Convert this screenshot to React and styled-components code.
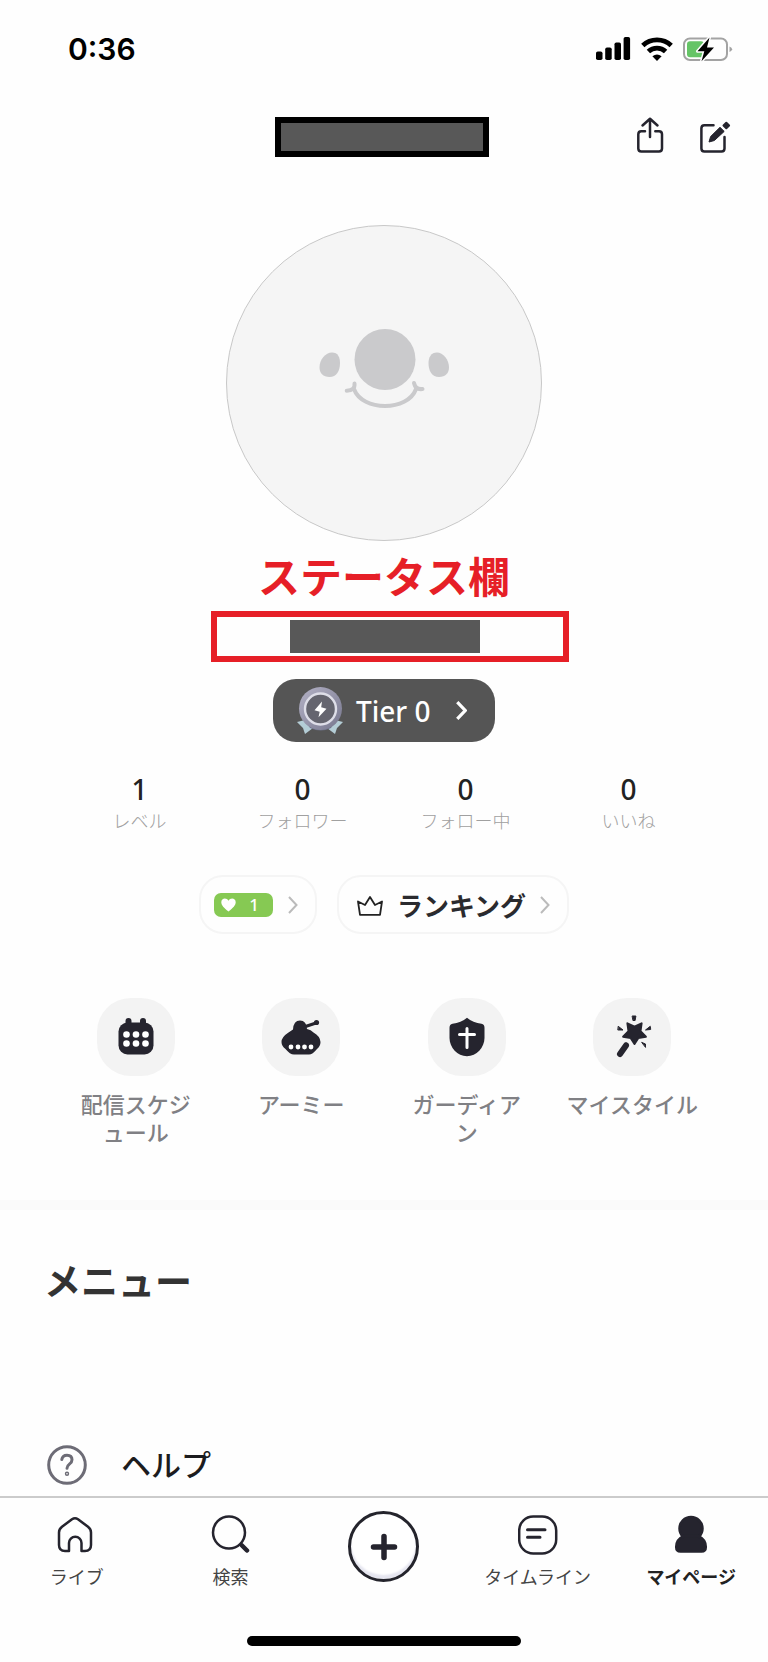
import React from 'react'
import styled, { createGlobalStyle } from 'styled-components'

const GlobalStyle = createGlobalStyle`
  * {
    box-sizing: border-box;
  }
  body {
    margin: 0;
    background: #fefefe;
    color: #222;
    font-family: "Noto Sans CJK JP", "Noto Sans", sans-serif;
  }
  svg {
    display: block;
    flex: none;
  }
  button {
    border: 0;
    padding: 0;
    background: none;
    color: inherit;
    font: inherit;
    cursor: pointer;
  }
  a {
    color: inherit;
    text-decoration: none;
  }
`;
const Page = styled.div`
  display: flex;
  flex-direction: column;
  min-height: 100vh;
`;
const StatusBar = styled.div`
  display: flex;
  align-items: center;
  justify-content: space-between;
  height: 97px;
  padding: 0 35px 0 68px;
`;
const Time = styled.time`
  font-family: Inter, sans-serif;
  font-size: 30px;
  font-weight: 600;
  color: #000;
`;
const StatusIcons = styled.div`
  display: flex;
  align-items: center;
  gap: 10px;
`;
const Header = styled.header`
  display: grid;
  grid-template-columns: 1fr auto 1fr;
  align-items: center;
  height: 80px;
  padding: 0 36px 0 32px;
`;
const HiddenName = styled.div`
  grid-column: 2;
  width: 214px;
  height: 40px;
  border: 6px solid #000;
  background: #585858;
`;
const HeaderActions = styled.div`
  display: flex;
  justify-content: flex-end;
  gap: 32px;
`;
const Profile = styled.main`
  display: flex;
  flex-direction: column;
  align-items: center;
  padding: 48px 0 55px;
`;
const Avatar = styled.div`
  width: 316px;
  height: 316px;
  border: 1px solid #c8c8c8;
  border-radius: 50%;
  background: #f5f5f5;
`;
const Note = styled.p`
  margin: 10px 0 12px;
  font-size: 42px;
  font-weight: 700;
  line-height: 48px;
  color: #e61f27;
`;
const StatusFrame = styled.div`
  display: flex;
  align-items: center;
  width: 358px;
  height: 51px;
  margin-left: 12px;
  padding-left: 73px;
  border: 6px solid #e61f27;
`;
const HiddenStatus = styled.div`
  width: 190px;
  height: 33px;
  background: #585858;
`;
const TierButton = styled.button`
  display: flex;
  align-items: center;
  width: 222px;
  height: 63px;
  margin-top: 17px;
  padding: 0 28px 0 23px;
  border-radius: 23px;
  background: #555;
  color: #fff;
  font-family: "Noto Sans", sans-serif;
  font-size: 28px;
  font-weight: 500;

  span {
    flex: 1;
    padding-left: 12px;
    text-align: left;
  }
`;
const Stats = styled.dl`
  display: grid;
  grid-template-columns: repeat(4, 1fr);
  align-self: stretch;
  margin: 31px 0 0;
  padding: 0 58px;
  text-align: center;
`;
const Stat = styled.div`
  display: flex;
  flex-direction: column-reverse;
  gap: 2px;
`;
const StatValue = styled.dd`
  margin: 0;
  font-family: "Noto Sans", sans-serif;
  font-size: 28px;
  font-weight: 500;
  line-height: 32px;
`;
const StatLabel = styled.dt`
  font-size: 18px;
  font-weight: 300;
  line-height: 26px;
  color: #a0a0a0;
`;
const Chips = styled.div`
  display: flex;
  gap: 20px;
  margin-top: 42px;
`;
const Chip = styled.button`
  display: flex;
  align-items: center;
  gap: ${(props) => props.$gap}px;
  height: 59px;
  padding: ${(props) => props.$pad};
  border: 2px solid #f5f5f5;
  border-radius: 24px;
  color: #2a2a2e;
  font-size: 26px;
  font-weight: 700;
  line-height: 36px;
`;
const FanBadge = styled.span`
  display: flex;
  align-items: center;
  justify-content: space-between;
  width: 59px;
  height: 24px;
  padding: 0 14px 0 7px;
  border-radius: 7px;
  background: #86c953;
  color: #fff;
  font-family: "Noto Sans", sans-serif;
  font-size: 17px;
  font-weight: 500;
`;
const Shortcuts = styled.nav`
  display: grid;
  grid-template-columns: repeat(4, 1fr);
  align-self: stretch;
  margin-top: 64px;
  padding: 0 53px;
`;
const Shortcut = styled.a`
  display: flex;
  flex-direction: column;
  align-items: center;
  gap: 13px;
  font-size: 22px;
  font-weight: 500;
  line-height: 28px;
  color: #808084;
  text-align: center;
  white-space: pre-line;
`;
const ShortcutIcon = styled.span`
  display: grid;
  place-items: center;
  width: 78px;
  height: 78px;
  border-radius: 34px;
  background: #f3f3f3;
`;
const Divider = styled.hr`
  width: 100%;
  height: 10px;
  margin: 0;
  border: 0;
  background: #fafafa;
`;
const Menu = styled.section`
  flex: 1;
  padding: 46px 44px 11px;
`;
const MenuTitle = styled.h2`
  margin: 0 0 141px;
  font-size: 37px;
  font-weight: 700;
  line-height: 48px;
  color: #333;
`;
const MenuItem = styled.a`
  display: flex;
  gap: 34px;
  height: 40px;
  padding-left: 3px;
  font-size: 30px;
  font-weight: 500;
  line-height: 37px;
  color: #1c1c1e;
`;
const TabBar = styled.nav`
  display: grid;
  grid-template-columns: repeat(5, 1fr);
  align-items: start;
  height: 140px;
  padding-top: 13px;
  border-top: 2px solid #cbcbcb;
`;
const Tab = styled.a`
  display: flex;
  flex-direction: column;
  align-items: center;
  gap: 9px;
  padding-top: 4px;
  font-size: 18px;
  font-weight: ${(props) => (props.$active ? 700 : 400)};
  line-height: 24px;
  color: ${(props) => (props.$active ? '#222' : '#444')};
`;
const AddButton = styled.button`
  display: grid;
  place-items: center;
  justify-self: center;
  width: 71px;
  height: 71px;
  border: 3px solid #24242c;
  border-radius: 50%;
  background: #fff;
  box-shadow: inset 0 -4px 2px #e6e6f0;
`;
const HomeIndicator = styled.div`
  align-self: center;
  width: 274px;
  height: 10px;
  margin-bottom: 16px;
  border-radius: 5px;
  background: #000;
`;

const ink = '#25242e'

const Chevron = ({ color, width = 2, w = 10, h = 18 }) => (
  <svg width={w} height={h} viewBox="0 0 10 18" fill="none" stroke={color} strokeWidth={width}>
    <path d="M1 1 8.500 9 1 17" />
  </svg>
)

const SignalIcon = () => (
  <svg width="35" height="24" viewBox="0 0 35 24">
    <rect x="0" y="14.500" width="6.500" height="8.500" rx="1.800" />
    <rect x="9.200" y="10.500" width="6.500" height="12.500" rx="1.800" />
    <rect x="18.500" y="5.500" width="6.500" height="17.500" rx="1.800" />
    <rect x="27.600" y="0" width="6.500" height="23" rx="1.800" />
  </svg>
)

const WifiIcon = () => (
  <svg width="32" height="24" viewBox="0 0 32 24" fill="none" stroke="#000" strokeWidth="4.800">
    <path d="M1.800 8.600a20.500 20.500 0 0 1 28.400 0" />
    <path d="M7.400 14.600a12.400 12.400 0 0 1 17.200 0" />
    <path d="M16 24l-4.600-4.700q4.600-3.600 9.200 0z" fill="#000" stroke="none" />
  </svg>
)

const BatteryIcon = () => (
  <svg width="50" height="26" viewBox="0 0 50 26">
    <rect x="1" y="2.500" width="43" height="21.500" rx="6" fill="none" stroke="#a3a3a3" strokeWidth="2" />
    <path d="M46.500 10.500q2.600 1 2.600 2.800t-2.600 2.800z" fill="#a3a3a3" />
    <rect x="4" y="5.300" width="17" height="16" rx="3" fill="#65c466" />
    <path
      d="M26.500 1.500 14.500 15.300h6.800L18.500 25.200 31 11.600H24z"
      stroke="#fefefe"
      strokeWidth="3"
      paintOrder="stroke"
      strokeLinejoin="round"
    />
  </svg>
)

const ShareIcon = () => (
  <svg width="32" height="40" viewBox="0 2 32 40" fill="none" stroke={ink} strokeWidth="2.500" strokeLinecap="round" strokeLinejoin="round">
    <path d="M11 16.300H7.300q-3 0-3 3V33.500q0 3 3 3H25q3 0 3-3V19.300q0-3-3-3h-3.700" />
    <path d="M16 22V4M8.500 10.500l7.500-6.800 7.500 6.800" />
  </svg>
)

const EditIcon = () => (
  <svg width="34" height="40" viewBox="0 2 34 40">
    <path d="M15.500 10.300H6.400q-3 0-3 3V33.500q0 3 3 3h17.100q3 0 3-3V22" fill="none" stroke={ink} strokeWidth="2.500" strokeLinecap="round" />
    <path d="M11 27l1.600-5.400 9.400-9.300 4.200 4.100-9.800 9.100z" fill={ink} stroke={ink} strokeWidth="1" strokeLinejoin="round" />
    <path d="M25.500 10.500l2.800-2.800 2.800 2.800-2.800 2.800z" fill={ink} stroke={ink} strokeWidth="2" strokeLinejoin="round" />
  </svg>
)

const Face = () => (
  <svg width="314" height="314" viewBox="0 0 314 314" fill="#cacacc">
    <circle cx="158" cy="133.500" r="30.500" />
    <path d="M105 126.500c6 0 8 5 8 10.500 0 8-3.500 14-10.500 14-6.500 0-10-4-10-9.500 0-8 6-15 12.500-15z" />
    <path d="M210 126.500c-6 0-8.500 5-8.500 10.500 0 8 3.500 14 10.500 14 6.500 0 10-4 10-9.500 0-8-6-15-12-15z" />
    <path
      d="M127.500 157.500q.8 7-7.800 7.200M187 157q1.500 7 8.500 6M127 163C135 185.600 181 185.600 189 163"
      fill="none"
      stroke="#cacacc"
      strokeWidth="4"
      strokeLinecap="round"
    />
  </svg>
)

const TierIcon = () => (
  <svg width="48" height="49" viewBox="0 0 48 49">
    <defs>
      <linearGradient id="tier" x1="0" y1="0" x2="1" y2="1">
        <stop offset="0" stopColor="#b4b2c6" />
        <stop offset="1" stopColor="#77778e" />
      </linearGradient>
    </defs>
    <path d="M1 36l8-2 8 8-8 6-2-6zM47 36l-8-2-8 8 8 6 2-6z" fill="#b4cdd6" />
    <path d="M9 34q15 13 31 0l-5 8q-10 5-21 0z" fill="#6c7086" />
    <circle cx="24.500" cy="22.500" r="21.500" fill="url(#tier)" />
    <circle cx="24.500" cy="23" r="15.500" fill="#65656f" stroke="#dedee8" strokeWidth="2.400" />
    <path d="M26 15.500l-7.500 8.800 5.200 1.500-1.200 5.500 8-8.600-5.300-1.500z" fill="#fff" />
  </svg>
)

const HeartIcon = () => (
  <svg width="15" height="14" viewBox="0 0 15 14" fill="#fff">
    <path d="M7.500 13.500C3 10 .3 7.200.3 4.200.3 0 5.700-.7 7.500 2.800 9.300-.7 14.700 0 14.700 4.200c0 3-2.700 5.800-7.200 9.300z" />
  </svg>
)

const CrownIcon = () => (
  <svg width="26" height="22" viewBox="0 -1 26 22" fill="none" stroke="#222" strokeWidth="1.800" strokeLinejoin="round">
    <path d="M1 6.500l7 3.500L13 2l5 8 7-3.500-2 13.300H3z" />
  </svg>
)

const CalendarIcon = () => (
  <svg width="36" height="40" viewBox="0 0 36 40">
    <path d="M10.500 4v6M25 4v6" stroke={ink} strokeWidth="6" strokeLinecap="round" />
    <rect x=".500" y="5.500" width="35" height="32" rx="9" fill={ink} />
    {[17.5, 26.500].map((y) => [8.500, 18, 27.500].map((x) => <circle key={x + '-' + y} cx={x} cy={y} r="3.300" fill="#fff" />))}
  </svg>
)

const TankIcon = () => (
  <svg width="40" height="40" viewBox="0 0 40 40">
    <path d="M23 10l12-4" stroke={ink} strokeWidth="3" />
    <circle cx="35.500" cy="5.500" r="2.600" fill={ink} />
    <path d="M12 12.500q.5-9 7-9 6.500 0 7 8.500 4 .5 6.500 3.500Q39 19 39.500 25q0 4-3.500 7-4.500 5.500-8 5.500H13q-4 0-8.500-5.500Q.5 29 .5 25q0-5 7-9.500z" fill={ink} />
    {[10, 17, 23.500, 30].map((x) => <circle key={x} cx={x} cy="30" r="2.400" fill="#fff" />)}
  </svg>
)

const ShieldIcon = () => (
  <svg width="36" height="40" viewBox="0 0 36 40">
    <path d="M18 .8q6 5.200 14.500 6 3 .5 3 4V21c0 9.500-8 18.200-17.500 18.200S.5 30.500.5 21V10.800q0-3.500 3-4Q12 6 18 .8z" fill={ink} />
    <path d="M18 11.500V30.500M10.500 17.500h15" stroke="#fff" strokeWidth="3" strokeLinecap="round" />
  </svg>
)

const WandIcon = () => (
  <svg width="40" height="44" viewBox="-2 0 40 44" fill={ink} stroke={ink} strokeLinejoin="round" strokeLinecap="round">
    <path d="M20.500 29l-3.700-5.900-7.700-1.400 5.400-5.600-1.100-7.800 7.100 3.400 7.100-3.400-1.100 7.800 5.400 5.600-7.700 1.400z" strokeWidth="2" />
    <path d="M12.500 29.500l-1 2" strokeWidth="4" />
    <path d="M12 30.500L6 39" strokeWidth="6" />
    <path d="M18.500 1h3.400l-.8 4.500h-1.800zM4.500 11.500l4.500 3.500-4.800 0zM36 11.500L31.500 15l4.800-.5zM28 27.500l3.500 1.500v3z" strokeWidth="1" />
  </svg>
)

const HelpIcon = () => (
  <svg width="40" height="40" viewBox="0 0 40 40" fill="none" stroke="#6d6c76" strokeWidth="3" strokeLinecap="round">
    <circle cx="20" cy="20" r="18.300" />
    <path d="M14.800 14.500q.7-4.300 5.200-4.300 5 0 5 4.500 0 2.500-2.600 4.400Q20 20.800 20 23.300" />
    <circle cx="20" cy="28.800" r=".700" />
  </svg>
)

const TabSvg = ({ children, viewBox = '0 0 40 40' }) => (
  <svg width="40" height="40" viewBox={viewBox} fill="none" stroke={ink} strokeWidth="2.500" strokeLinecap="round" strokeLinejoin="round">
    {children}
  </svg>
)

const stats = [
  ['レベル', 1],
  ['フォロワー', 0],
  ['フォロー中', 0],
  ['いいね', 0],
]

const shortcuts = [
  ['配信スケジ\nュール', CalendarIcon],
  ['アーミー', TankIcon],
  ['ガーディア\nン', ShieldIcon],
  ['マイスタイル', WandIcon],
]

function App() {
  return (
    <Page>
      <GlobalStyle />
      <StatusBar>
        <Time>0:36</Time>
        <StatusIcons>
          <SignalIcon />
          <WifiIcon />
          <BatteryIcon />
        </StatusIcons>
      </StatusBar>
      <Header>
        <HiddenName />
        <HeaderActions>
          <button aria-label="共有"><ShareIcon /></button>
          <button aria-label="編集"><EditIcon /></button>
        </HeaderActions>
      </Header>
      <Profile>
        <Avatar><Face /></Avatar>
        <Note>ステータス欄</Note>
        <StatusFrame><HiddenStatus /></StatusFrame>
        <TierButton>
          <TierIcon />
          <span>Tier 0</span>
          <Chevron color="#fff" width={3} w={11} h={19} />
        </TierButton>
        <Stats>
          {stats.map(([label, value]) => (
            <Stat key={label}>
              <StatLabel>{label}</StatLabel>
              <StatValue>{value}</StatValue>
            </Stat>
          ))}
        </Stats>
        <Chips>
          <Chip $gap={15} $pad="0 17px 0 13px">
            <FanBadge><HeartIcon />1</FanBadge>
            <Chevron color="#bbb" />
          </Chip>
          <Chip $gap={14} $pad="0 17px 0 18px">
            <CrownIcon />
            ランキング
            <Chevron color="#bbb" />
          </Chip>
        </Chips>
        <Shortcuts>
          {shortcuts.map(([label, Icon]) => (
            <Shortcut href="#" key={label}>
              <ShortcutIcon><Icon /></ShortcutIcon>
              {label}
            </Shortcut>
          ))}
        </Shortcuts>
      </Profile>
      <Divider />
      <Menu>
        <MenuTitle>メニュー</MenuTitle>
        <MenuItem href="#">
          <HelpIcon />
          ヘルプ
        </MenuItem>
      </Menu>
      <TabBar>
        <Tab href="#">
          <TabSvg viewBox="1 0 40 40">
            <path d="M16 4.200q3-2 6 0l10 7.600q3 2.400 3 5.700V30q0 6-6 6h-3.500v-8a6.200 6.200 0 0 0-12.500 0v8H9q-6 0-6-6V17.500q0-3.300 3-5.700z" />
          </TabSvg>
          ライブ
        </Tab>
        <Tab href="#">
          <TabSvg>
            <circle cx="19" cy="17.500" r="16" />
            <path d="M32 30.500l5 5" strokeWidth="4.500" />
          </TabSvg>
          検索
        </Tab>
        <AddButton aria-label="追加">
          <svg width="28" height="28" viewBox="0 0 28 28" stroke={ink} strokeWidth="5.500" strokeLinecap="round">
            <path d="M14 3.500v21M3.500 14h21" />
          </svg>
        </AddButton>
        <Tab href="#">
          <TabSvg>
            <rect x="1.200" y="1.500" width="37" height="37" rx="14" />
            <path d="M9.500 14.700h17.500M9.500 22.300H22" strokeWidth="3" />
          </TabSvg>
          タイムライン
        </Tab>
        <Tab href="#" $active>
          <TabSvg>
            <circle cx="20" cy="13.500" r="11.500" fill={ink} />
            <path d="M13 21q-7.800 3.500-7.800 11 0 4.500 4.300 4.500h21q4.300 0 4.300-4.500 0-7.500-7.800-11z" fill={ink} />
          </TabSvg>
          マイページ
        </Tab>
      </TabBar>
      <HomeIndicator />
    </Page>
  )
}

export default App
